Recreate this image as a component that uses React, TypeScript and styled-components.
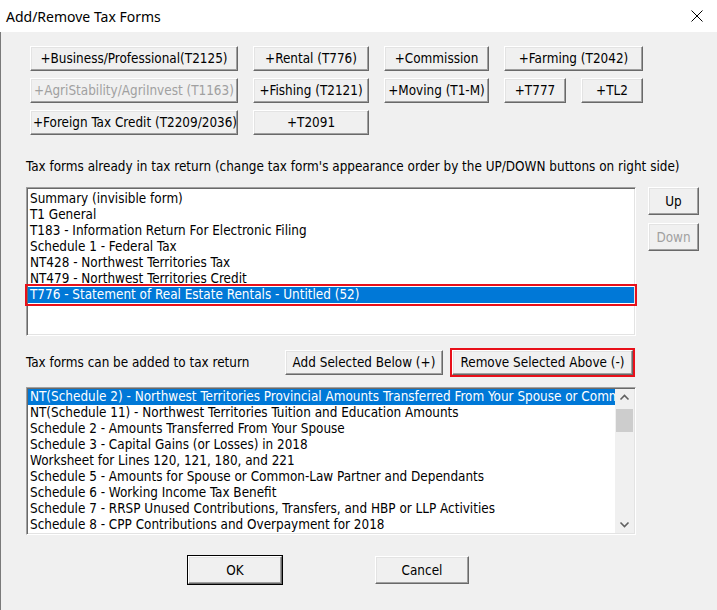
import styled, { createGlobalStyle, css } from "styled-components";

const Global = createGlobalStyle`
  html, body {
    margin: 0;
    padding: 0;
    background: #ffffff;
  }
  body {
    font-family: "DejaVu Sans Condensed", "Liberation Sans", sans-serif;
    font-size: 13.4px;
    color: #000;
  }
`;

const Window = styled.div`
  width: 717px;
  height: 610px;
  display: flex;
  flex-direction: column;
  overflow: hidden;
`;

const TitleBar = styled.div`
  height: 32px;
  background: #ffffff;
  display: flex;
  align-items: center;
  justify-content: space-between;
  padding: 0 14px 0 6px;
  box-sizing: border-box;
`;

const Title = styled.span`
  font-family: "Noto Sans", "Open Sans", sans-serif;
  font-size: 14px;
  color: #000;
`;

const CloseIcon = styled.svg`
  width: 12px;
  height: 12px;
  display: block;
`;

const Body = styled.div`
  flex: 1;
  background: #f0f0f0;
  border-left: 1px solid #7a7a7a;
  padding: 14px 0 0 25px;
  display: flex;
  flex-direction: column;
`;

const QuickGrid = styled.div`
  display: grid;
  grid-template-columns: 208px 116px 105px 62px 62px;
  grid-auto-rows: 25px;
  column-gap: 15px;
  row-gap: 7px;
  margin-left: 4px;
`;

const Btn = styled.button<{ $span?: number; $default?: boolean }>`
  font-family: "DejaVu Sans Condensed", "Liberation Sans", sans-serif;
  font-size: 13.4px;
  color: #000;
  background: #f0f0f0;
  border: 1px solid;
  border-color: #ffffff #696969 #696969 #ffffff;
  box-shadow: inset -1px -1px 0 #a0a0a0, inset 1px 1px 0 #e3e3e3;
  padding: 0 2px;
  margin: 0;
  white-space: nowrap;
  overflow: hidden;
  grid-column: ${(p) => (p.$span ? `span ${p.$span}` : "auto")};
  &:disabled {
    color: #a0a0a0;
  }
  ${(p) =>
    p.$default &&
    css`
      outline: 1px solid #000;
      outline-offset: 0;
    `}
`;

const Caption = styled.div`
  line-height: 16px;
  margin-top: 24px;
  white-space: nowrap;
`;

const ListRow = styled.div`
  display: flex;
  align-items: flex-start;
  margin-top: 12px;
`;

const ListBox = styled.div<{ $height: number }>`
  position: relative;
  width: 610px;
  height: ${(p) => p.$height}px;
  box-sizing: border-box;
  background: #ffffff;
  border: 1px solid;
  border-color: #a0a0a0 #ffffff #ffffff #a0a0a0;
  box-shadow: inset 1px 1px 0 #696969, inset -1px -1px 0 #e3e3e3;
  padding: 1px;
  display: flex;
`;

const Items = styled.div<{ $padTop?: number; $clip?: boolean }>`
  flex: 1;
  min-width: 0;
  padding-top: ${(p) => p.$padTop ?? 0}px;
  overflow: ${(p) => (p.$clip ? "hidden" : "visible")};
`;

const Item = styled.div<{ $selected?: boolean; $marked?: boolean }>`
  height: 16px;
  line-height: 16px;
  padding-left: 2px;
  white-space: nowrap;
  overflow: hidden;
  background: ${(p) => (p.$selected ? "#0078d7" : "transparent")};
  color: ${(p) => (p.$selected ? "#ffffff" : "#000")};
  ${(p) =>
    p.$marked &&
    css`
      position: relative;
      outline: 2px solid #e8101a;
      outline-offset: 1px;
    `}
`;

const SideButtons = styled.div`
  display: flex;
  flex-direction: column;
  gap: 8px;
  margin-left: 12px;
  ${Btn} {
    width: 51px;
    height: 28px;
  }
`;

const ActionRow = styled.div`
  display: flex;
  align-items: center;
  margin-top: 14px;
  height: 25px;
`;

const ActionLabel = styled.span`
  width: 259px;
  white-space: nowrap;
`;

const ActionBtn = styled(Btn)<{ $w: number; $marked?: boolean }>`
  width: ${(p) => p.$w}px;
  height: 25px;
  margin-right: 9px;
  ${(p) =>
    p.$marked &&
    css`
      outline: 2px solid #e8101a;
      outline-offset: 0px;
    `}
`;

const ScrollBar = styled.div`
  width: 19px;
  background: #f0f0f0;
  display: flex;
  flex-direction: column;
  align-items: center;
`;

const Arrow = styled.svg`
  width: 19px;
  height: 17px;
  display: block;
  flex: none;
`;

const Thumb = styled.div`
  width: 17px;
  height: 23px;
  background: #cdcdcd;
  margin-top: 3px;
`;

const Track = styled.div`
  flex: 1;
`;

const Footer = styled.div`
  display: flex;
  margin-top: 21px;
  padding-left: 162px;
  gap: 93px;
  ${Btn} {
    width: 94px;
    height: 28px;
  }
`;

const inReturn = [
  "Summary (invisible form)",
  "T1 General",
  "T183 - Information Return For Electronic Filing",
  "Schedule 1 - Federal Tax",
  "NT428 - Northwest Territories Tax",
  "NT479 - Northwest Territories Credit",
  "T776 - Statement of Real Estate Rentals - Untitled (52)",
];

const available = [
  "NT(Schedule 2) - Northwest Territories Provincial Amounts Transferred From Your Spouse or Common-Law Partner",
  "NT(Schedule 11) - Northwest Territories Tuition and Education Amounts",
  "Schedule 2 - Amounts Transferred From Your Spouse",
  "Schedule 3 - Capital Gains (or Losses) in 2018",
  "Worksheet for Lines 120, 121, 180, and 221",
  "Schedule 5 - Amounts for Spouse or Common-Law Partner and Dependants",
  "Schedule 6 - Working Income Tax Benefit",
  "Schedule 7 - RRSP Unused Contributions, Transfers, and HBP or LLP Activities",
  "Schedule 8 - CPP Contributions and Overpayment for 2018",
];

function App() {
  return (
    <Window>
      <Global />
      <TitleBar>
        <Title>Add/Remove Tax Forms</Title>
        <CloseIcon viewBox="0 0 12 12">
          <path d="M0.5 0.5 L11.5 11.5 M11.5 0.5 L0.5 11.5" stroke="#000" strokeWidth="1" />
        </CloseIcon>
      </TitleBar>
      <Body>
        <QuickGrid>
          <Btn>+Business/Professional(T2125)</Btn>
          <Btn>+Rental (T776)</Btn>
          <Btn>+Commission</Btn>
          <Btn $span={2}>+Farming (T2042)</Btn>
          <Btn disabled>+AgriStability/AgriInvest (T1163)</Btn>
          <Btn>+Fishing (T2121)</Btn>
          <Btn>+Moving (T1-M)</Btn>
          <Btn>+T777</Btn>
          <Btn>+TL2</Btn>
          <Btn>+Foreign Tax Credit (T2209/2036)</Btn>
          <Btn>+T2091</Btn>
        </QuickGrid>

        <Caption>
          Tax forms already in tax return (change tax form's appearance order by the UP/DOWN buttons on right side)
        </Caption>

        <ListRow>
          <ListBox $height={149}>
            <Items $padTop={2}>
              {inReturn.map((t, i) => (
                <Item key={t} $selected={i === inReturn.length - 1} $marked={i === inReturn.length - 1}>
                  {t}
                </Item>
              ))}
            </Items>
          </ListBox>
          <SideButtons>
            <Btn>Up</Btn>
            <Btn disabled>Down</Btn>
          </SideButtons>
        </ListRow>

        <ActionRow>
          <ActionLabel>Tax forms can be added to tax return</ActionLabel>
          <ActionBtn $w={158}>Add Selected Below (+)</ActionBtn>
          <ActionBtn $w={181} $marked>
            Remove Selected Above (-)
          </ActionBtn>
        </ActionRow>

        <ListRow>
          <ListBox $height={148}>
            <Items $clip>
              {available.map((t, i) => (
                <Item key={t} $selected={i === 0}>
                  {t}
                </Item>
              ))}
            </Items>
            <ScrollBar>
              <Arrow viewBox="0 0 19 17">
                <path d="M5.5 10.5 L9.5 6.5 L13.5 10.5" stroke="#606060" strokeWidth="1.6" fill="none" />
              </Arrow>
              <Thumb />
              <Track />
              <Arrow viewBox="0 0 19 17">
                <path d="M5.5 6.5 L9.5 10.5 L13.5 6.5" stroke="#606060" strokeWidth="1.6" fill="none" />
              </Arrow>
            </ScrollBar>
          </ListBox>
        </ListRow>

        <Footer>
          <Btn $default>OK</Btn>
          <Btn>Cancel</Btn>
        </Footer>
      </Body>
    </Window>
  );
}

export default App;
